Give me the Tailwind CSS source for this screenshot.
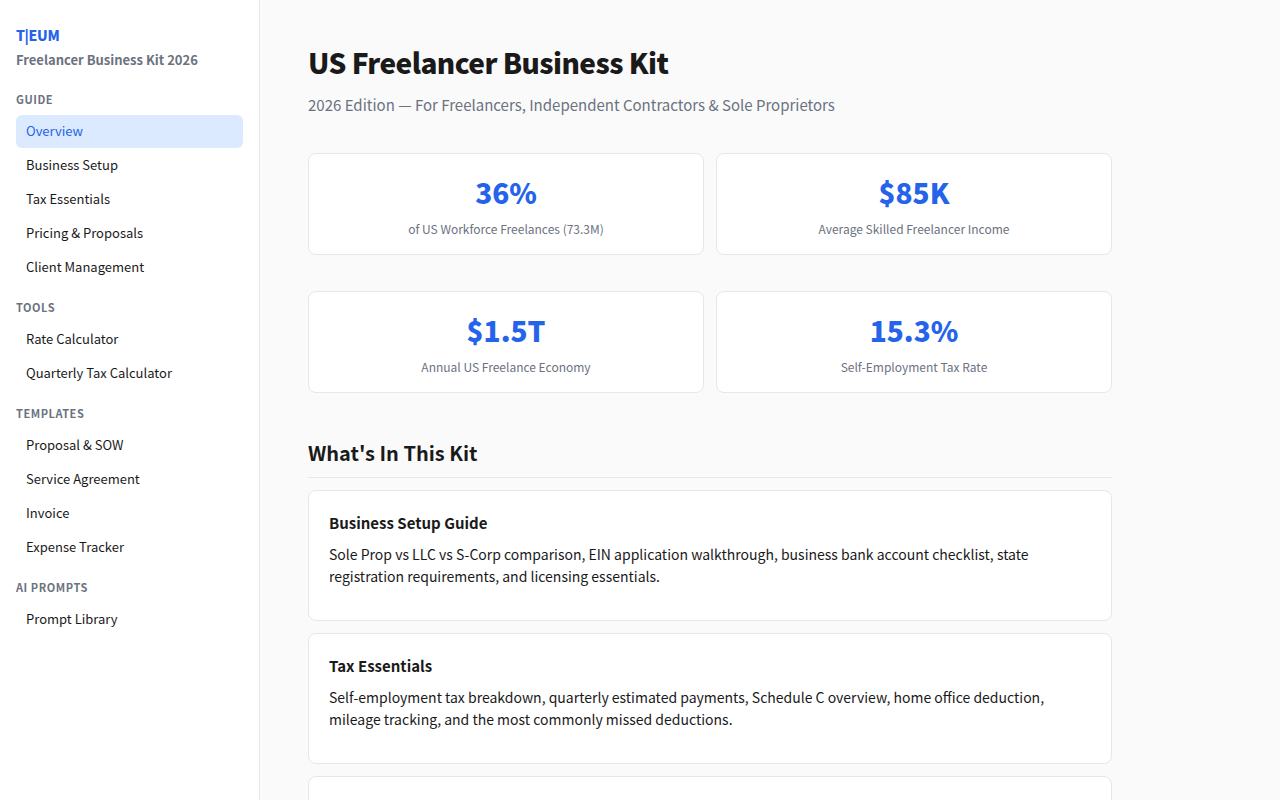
<!DOCTYPE html>
<html lang="en">
<head>
  <meta charset="UTF-8" />
  <meta name="viewport" content="width=device-width, initial-scale=1.0" />
  <title>US Freelancer Business Kit 2026</title>
  <script src="https://cdn.jsdelivr.net/npm/@tailwindcss/browser@4"></script>
</head>
<body class="bg-[#fafafa] text-[#1a1a1a] font-['Noto_Sans_CJK_KR','Noto_Sans_CJK_SC',sans-serif] text-sm leading-[22px]">

  <div class="flex min-h-screen">

    <!-- sidebar -->
    <nav class="sticky top-0 h-screen w-[260px] shrink-0 overflow-y-auto bg-white border-r border-[#e5e7eb] px-4 py-6">
      <div class="text-sm leading-[22px] font-extrabold tracking-tight text-[#2563eb]">T|EUM</div>
      <div class="mt-1 mb-5 text-[13px] leading-5 font-semibold text-[#6b7280]">Freelancer Business Kit 2026</div>

      <h3 class="mb-[7px] text-[11px] leading-[18px] font-bold uppercase tracking-wider text-[#6b7280]">Guide</h3>
      <ul class="mb-[13px] text-[13px] leading-5">
        <li class="pb-px"><a href="#overview" class="block rounded-md px-2.5 pt-1.5 pb-[7px] bg-[#dbeafe] text-[#2563eb]">Overview</a></li>
        <li class="pb-px"><a href="#setup" class="block rounded-md px-2.5 pt-1.5 pb-[7px] hover:bg-gray-100">Business Setup</a></li>
        <li class="pb-px"><a href="#tax" class="block rounded-md px-2.5 pt-1.5 pb-[7px] hover:bg-gray-100">Tax Essentials</a></li>
        <li class="pb-px"><a href="#pricing" class="block rounded-md px-2.5 pt-1.5 pb-[7px] hover:bg-gray-100">Pricing &amp; Proposals</a></li>
        <li class="pb-px"><a href="#clients" class="block rounded-md px-2.5 pt-1.5 pb-[7px] hover:bg-gray-100">Client Management</a></li>
      </ul>

      <h3 class="mb-[7px] text-[11px] leading-[18px] font-bold uppercase tracking-wider text-[#6b7280]">Tools</h3>
      <ul class="mb-[13px] text-[13px] leading-5">
        <li class="pb-px"><a href="#rate" class="block rounded-md px-2.5 pt-1.5 pb-[7px] hover:bg-gray-100">Rate Calculator</a></li>
        <li class="pb-px"><a href="#quarterly" class="block rounded-md px-2.5 pt-1.5 pb-[7px] hover:bg-gray-100">Quarterly Tax Calculator</a></li>
      </ul>

      <h3 class="mb-[7px] text-[11px] leading-[18px] font-bold uppercase tracking-wider text-[#6b7280]">Templates</h3>
      <ul class="mb-[13px] text-[13px] leading-5">
        <li class="pb-px"><a href="#proposal" class="block rounded-md px-2.5 pt-1.5 pb-[7px] hover:bg-gray-100">Proposal &amp; SOW</a></li>
        <li class="pb-px"><a href="#agreement" class="block rounded-md px-2.5 pt-1.5 pb-[7px] hover:bg-gray-100">Service Agreement</a></li>
        <li class="pb-px"><a href="#invoice" class="block rounded-md px-2.5 pt-1.5 pb-[7px] hover:bg-gray-100">Invoice</a></li>
        <li class="pb-px"><a href="#expenses" class="block rounded-md px-2.5 pt-1.5 pb-[7px] hover:bg-gray-100">Expense Tracker</a></li>
      </ul>

      <h3 class="mb-[7px] text-[11px] leading-[18px] font-bold uppercase tracking-wider text-[#6b7280]">AI Prompts</h3>
      <ul class="mb-[13px] text-[13px] leading-5">
        <li class="pb-px"><a href="#prompts" class="block rounded-md px-2.5 pt-1.5 pb-[7px] hover:bg-gray-100">Prompt Library</a></li>
      </ul>
    </nav>

    <!-- overview -->
    <main id="overview" class="flex-1 max-w-[900px] px-12 py-10">
      <h1 class="mb-2 text-[28px] leading-[45px] font-extrabold tracking-[-0.02em]">US Freelancer Business Kit</h1>
      <p class="mb-9 text-[15px] leading-6 text-[#6b7280]">2026 Edition — For Freelancers, Independent Contractors &amp; Sole Proprietors</p>

      <div class="grid grid-cols-2 gap-x-3 gap-y-9 text-center">
        <div class="bg-white border border-[#e5e7eb] rounded-lg p-4">
          <div class="mb-1 text-[28px] leading-[45px] font-extrabold text-[#2563eb]">36%</div>
          <div class="text-xs leading-[19px] text-[#6b7280]">of US Workforce Freelances (73.3M)</div>
        </div>
        <div class="bg-white border border-[#e5e7eb] rounded-lg p-4">
          <div class="mb-1 text-[28px] leading-[45px] font-extrabold text-[#2563eb]">$85K</div>
          <div class="text-xs leading-[19px] text-[#6b7280]">Average Skilled Freelancer Income</div>
        </div>
        <div class="bg-white border border-[#e5e7eb] rounded-lg p-4">
          <div class="mb-1 text-[28px] leading-[45px] font-extrabold text-[#2563eb]">$1.5T</div>
          <div class="text-xs leading-[19px] text-[#6b7280]">Annual US Freelance Economy</div>
        </div>
        <div class="bg-white border border-[#e5e7eb] rounded-lg p-4">
          <div class="mb-1 text-[28px] leading-[45px] font-extrabold text-[#2563eb]">15.3%</div>
          <div class="text-xs leading-[19px] text-[#6b7280]">Self-Employment Tax Rate</div>
        </div>
      </div>

      <h2 class="mt-11 mb-3 pb-2 border-b border-[#e5e7eb] text-xl leading-8 font-bold">What's In This Kit</h2>

      <div class="space-y-3">
        <div class="bg-white border border-[#e5e7eb] rounded-lg p-5">
          <h3 class="mb-2 text-[15px] leading-6 font-semibold">Business Setup Guide</h3>
          <p class="mb-[13px]">Sole Prop vs LLC vs S-Corp comparison, EIN application walkthrough, business bank account checklist, state registration requirements, and licensing essentials.</p>
        </div>
        <div class="bg-white border border-[#e5e7eb] rounded-lg p-5">
          <h3 class="mb-2 text-[15px] leading-6 font-semibold">Tax Essentials</h3>
          <p class="mb-[13px]">Self-employment tax breakdown, quarterly estimated payments, Schedule C overview, home office deduction, mileage tracking, and the most commonly missed deductions.</p>
        </div>
        <div class="bg-white border border-[#e5e7eb] rounded-lg p-5">
          <h3 class="mb-2 text-[15px] leading-6 font-semibold">Pricing &amp; Proposals</h3>
        </div>
      </div>
    </main>

  </div>

</body>
</html>
